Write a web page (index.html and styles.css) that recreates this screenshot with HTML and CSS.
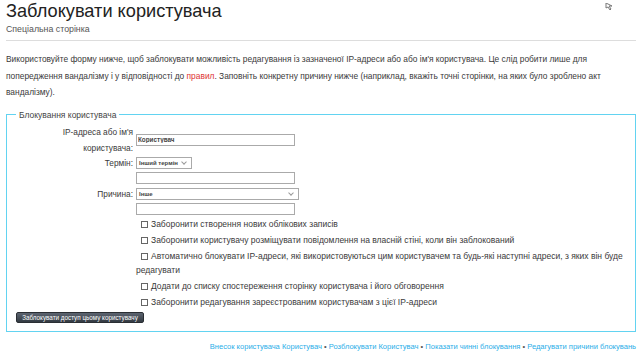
FILE: index.html
```html
<!DOCTYPE html>
<html lang="uk">
  <head>
    <meta charset="UTF-8">
    <title>Заблокувати користувача</title>
    <link rel="stylesheet" href="styles.css">
  </head>
  <body>
    <div class="page-tools">
      <svg width="10" height="8" viewBox="0 0 10 8"><path d="M1 0 V5 L3 4 L5 7 L6 6 L4 3 L7 3 Z" fill="none" stroke="#777" stroke-width="1"/></svg>
    </div>

    <h1 class="title">Заблокувати користувача</h1>
    <div class="subtitle">Спеціальна сторінка</div>

    <p class="intro">
      Використовуйте форму нижче, щоб заблокувати можливість редагування із зазначеної IP-адреси або або ім'я користувача. Це слід робити лише для попередження вандалізму і у відповідності до <a href="#" class="new">правил</a>. Заповніть конкретну причину нижче (наприклад, вкажіть точні сторінки, на яких було зроблено акт вандалізму).
    </p>

    <fieldset class="block-form">
      <legend>Блокування користувача</legend>

      <div class="form-grid">
        <label class="form-label form-label-wide" for="target">IP-адреса або ім'я користувача:</label>
        <div class="form-field"><input type="text" id="target" class="text-input" value="Користувач"></div>

        <label class="form-label">Термін:</label>
        <div class="form-field">
          <span class="select select-short">Інший термін<span class="chevron"></span></span>
        </div>

        <div></div>
        <div class="form-field"><input type="text" class="text-input"></div>

        <label class="form-label">Причина:</label>
        <div class="form-field">
          <span class="select select-long">Інше<span class="chevron"></span></span>
        </div>

        <div></div>
        <div class="form-field"><input type="text" class="text-input"></div>

        <div></div>
        <div class="checks">
          <label class="check"><span class="box"></span>Заборонити створення нових облікових записів</label>
          <label class="check"><span class="box"></span>Заборонити користувачу розміщувати повідомлення на власній стіні, коли він заблокований</label>
          <label class="check"><span class="box"></span>Автоматично блокувати IP-адреси, які використовуються цим користувачем та будь-які наступні адреси, з яких він буде редагувати</label>
          <label class="check"><span class="box"></span>Додати до списку спостереження сторінку користувача і його обговорення</label>
          <label class="check"><span class="box"></span>Заборонити редагування зареєстрованим користувачам з цієї IP-адреси</label>
        </div>
      </div>

      <button class="submit">Заблокувати доступ цьому користувачу</button>
    </fieldset>

    <div class="footer-links">
      <a href="#">Внесок користувача Користувач</a> •
      <a href="#">Розблокувати Користувач</a> •
      <a href="#">Показати чинні блокування</a> •
      <a href="#">Редагувати причини блокувань</a>
    </div>
  </body>
</html>
```

FILE: styles.css
```css
html, body {
  overflow: hidden;
}
body {
  font-family: "Liberation Sans", Arial, sans-serif;
  color: #3a3a3a;
  background-color: white;
  margin: 0;
  padding: 0 4px 0 6px;
  position: relative;
}
.page-tools {
  position: absolute;
  top: -3px;
  right: 25px;
}
.title {
  font-weight: normal;
  font-size: 18.2px;
  line-height: 23px;
  color: #222;
  margin: 0;
}
.subtitle {
  font-size: 8.8px;
  line-height: 12px;
  color: #555;
  padding-bottom: 5px;
  border-bottom: 1px solid #ddd;
}
.intro {
  font-size: 8.4px;
  line-height: 16.5px;
  margin: 10px 0 0;
}
.intro a.new {
  color: #d33;
  text-decoration: none;
}
.block-form {
  border: 1px solid #62d3f1;
  margin: 8px 0 0;
  padding: 4px 4px 8px 9px;
}
.block-form legend {
  font-size: 8.5px;
  line-height: 12px;
  color: #444;
  padding: 0 3px;
  margin-left: 0;
}
.form-grid {
  display: grid;
  grid-template-columns: 117px 1fr;
  column-gap: 3px;
  font-size: 8.3px;
}
.form-label {
  text-align: right;
  line-height: 16px;
  padding-left: 38px;
  align-self: center;
}
.form-label-wide {
  margin: -1px 0;
}
.form-field {
  display: flex;
  align-items: center;
  min-height: 15px;
}
.text-input {
  width: 159px;
  height: 12px;
  box-sizing: border-box;
  border: 1px solid #aaa;
  font-family: "Liberation Sans", sans-serif;
  font-size: 6.3px;
  font-weight: bold;
  padding: 0 1px;
  color: #444;
}
.select {
  position: relative;
  display: inline-block;
  height: 12px;
  box-sizing: border-box;
  border: 1px solid #aaa;
  font-size: 6px;
  font-weight: bold;
  line-height: 10px;
  padding-left: 2px;
  color: #444;
}
.select-short {
  width: 56px;
}
.select-long {
  width: 163px;
}
.chevron {
  position: absolute;
  right: 5px;
  top: 2px;
  width: 3px;
  height: 3px;
  border-right: 1px solid #999;
  border-bottom: 1px solid #999;
  transform: rotate(45deg);
}
.checks {
  display: flex;
  flex-direction: column;
  gap: 2px;
}
.check {
  font-size: 8.5px;
  line-height: 14px;
}
.box {
  display: inline-block;
  width: 5px;
  height: 5px;
  border: 1px solid #666;
  margin: 0 3px 0 5px;
  vertical-align: -1px;
}
.submit {
  display: block;
  margin-top: 3px;
  font-family: "Liberation Sans", sans-serif;
  font-size: 6.3px;
  color: white;
  background: linear-gradient(#5c6470, #333a42);
  border: 1px solid #2a2e33;
  border-radius: 2px;
  height: 11px;
  width: 128px;
  padding: 0;
  line-height: 9px;
}
.footer-links {
  text-align: right;
  font-size: 7.55px;
  line-height: 12px;
  color: #555;
  margin-top: 9px;
}
.footer-links a {
  color: #2aaee8;
  text-decoration: none;
}
```
